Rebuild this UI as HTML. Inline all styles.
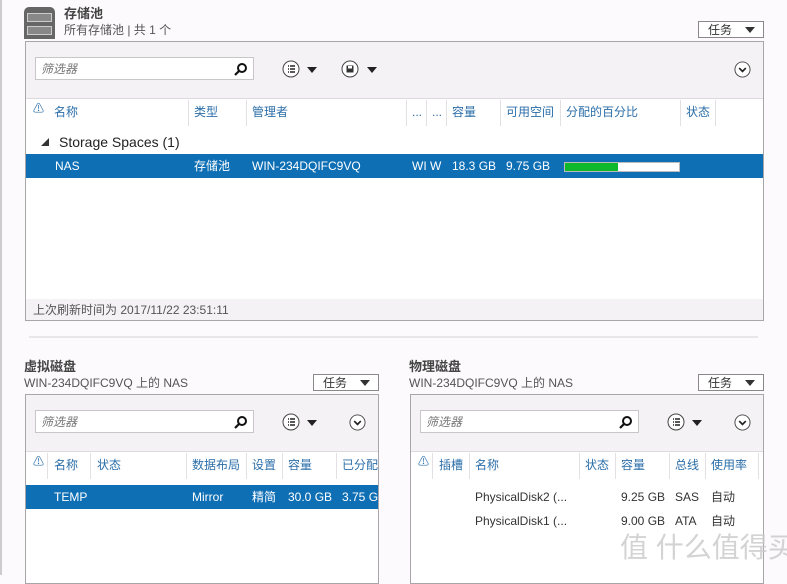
<!DOCTYPE html>
<html><head><meta charset="utf-8"><style>
*{margin:0;padding:0;box-sizing:border-box}
body{width:787px;height:575px;overflow:hidden;background:#fcfafc;font-family:"Liberation Sans","Noto Sans CJK SC",sans-serif;font-size:12px;line-height:15px;color:#333;position:relative}
.a{position:absolute;white-space:nowrap;line-height:15px}
.box{position:absolute;border:1px solid #a9a6a9;background:#fff;overflow:hidden}
.tb{position:absolute;left:0;right:0;top:0;background:#f4f2f4;border-bottom:1px solid #dcdadc}
.filter{position:absolute;background:#fff;border:1px solid #c8c6c8;height:23px;font-style:italic;color:#777;padding:4px 0 0 5px;font-size:12px;line-height:14px}
.filter svg{position:absolute;right:5px;top:4px}
.hdr{color:#2b6ea8}
.sep{position:absolute;width:1px;background:#e2e0e2}
.sel{position:absolute;background:#0f6fb5;color:#fff}
.task{position:absolute;border:1px solid #8a888a;background:#fff;height:17px;font-size:12px;line-height:14px;padding:1px 0 0 9px;color:#333}
.task:after{content:"";position:absolute;right:8px;top:5px;border-left:5px solid transparent;border-right:5px solid transparent;border-top:6px solid #333}
.ic{position:absolute}
.dd{position:absolute;border-left:5px solid transparent;border-right:5px solid transparent;border-top:6px solid #222}
.title{font-weight:bold;font-size:13px;color:#444}
</style></head><body>
<div class="a" style="left:0;top:0;width:2px;height:575px;background:#ccc"></div>

<div class="a" style="left:24px;top:7px;width:31px;height:32px;background:#666;border-radius:5px 5px 0 0"></div>
<div class="a" style="left:27px;top:13px;width:25px;height:9px;background:#888;border:1px solid #ccc"></div>
<div class="a" style="left:27px;top:26px;width:25px;height:9px;background:#888;border:1px solid #ccc"></div>
<div class="a title" style="left:64px;top:6px">存储池</div>
<div class="a" style="left:64px;top:23px;color:#555">所有存储池 | 共 1 个</div>
<div class="task" style="left:698px;top:21px;width:66px">任务</div>

<div class="box" style="left:25px;top:41px;width:739px;height:280px">
 <div class="tb" style="height:57px"></div>
 <div class="filter" style="left:9px;top:15px;width:219px">筛选器<svg width="14" height="14" viewBox="0 0 14 14"><circle cx="8" cy="6" r="4" fill="none" stroke="#111" stroke-width="2"/><path d="M5 9L1 13" stroke="#111" stroke-width="2.2"/></svg></div>
 <svg class="ic" style="left:256px;top:18px" width="18" height="18" viewBox="0 0 18 18"><circle cx="9" cy="9" r="8" fill="#fff" stroke="#444"/><path d="M6 6h1M6 9h1M6 12h1M8 6h5M8 9h5M8 12h5" stroke="#222" stroke-width="1.6"/></svg>
 <div class="dd" style="left:281px;top:25px"></div>
 <svg class="ic" style="left:315px;top:18px" width="18" height="18" viewBox="0 0 18 18"><circle cx="9" cy="9" r="8" fill="#fff" stroke="#444"/><rect x="5.5" y="5.5" width="7" height="7" fill="#333"/><rect x="7" y="6" width="4" height="2.5" fill="#fff"/></svg>
 <div class="dd" style="left:341px;top:25px"></div>
 <svg class="ic" style="left:708px;top:19px" width="17" height="17" viewBox="0 0 18 18"><circle cx="9" cy="9" r="8" fill="#fff" stroke="#444"/><path d="M5.5 7.5L9 11l3.5-3.5" fill="none" stroke="#222" stroke-width="1.8"/></svg>
 <div class="a" style="left:7px;top:60px;color:#2b6ea8;font-size:11px">⚠</div>
 <div class="a hdr" style="left:28px;top:63px">名称</div>
 <div class="sep" style="left:162px;top:58px;height:26px"></div>
 <div class="a hdr" style="left:168px;top:63px">类型</div>
 <div class="sep" style="left:220px;top:58px;height:26px"></div>
 <div class="a hdr" style="left:226px;top:63px">管理者</div>
 <div class="sep" style="left:380px;top:58px;height:26px"></div>
 <div class="a hdr" style="left:386px;top:63px">...</div>
 <div class="sep" style="left:400px;top:58px;height:26px"></div>
 <div class="a hdr" style="left:406px;top:63px">...</div>
 <div class="sep" style="left:420px;top:58px;height:26px"></div>
 <div class="a hdr" style="left:426px;top:63px">容量</div>
 <div class="sep" style="left:474px;top:58px;height:26px"></div>
 <div class="a hdr" style="left:480px;top:63px">可用空间</div>
 <div class="sep" style="left:534px;top:58px;height:26px"></div>
 <div class="a hdr" style="left:540px;top:63px">分配的百分比</div>
 <div class="sep" style="left:654px;top:58px;height:26px"></div>
 <div class="a hdr" style="left:660px;top:63px">状态</div>
 <div class="sep" style="left:689px;top:58px;height:26px"></div>
 <div class="a" style="left:15px;top:93px;font-size:8px;color:#333">◢</div>
 <div class="a" style="left:33px;top:92px;font-size:14px;line-height:17px;color:#222">Storage Spaces (1)</div>
 <div class="sel" style="left:0;top:112px;width:737px;height:24px"></div>
 <div class="a" style="left:29px;top:117px;color:#fff">NAS</div>
 <div class="a" style="left:168px;top:117px;color:#fff">存储池</div>
 <div class="a" style="left:226px;top:117px;color:#fff">WIN-234DQIFC9VQ</div>
 <div class="a" style="left:386px;top:117px;color:#fff">WI W</div>
 <div class="a" style="left:426px;top:117px;color:#fff">18.3 GB</div>
 <div class="a" style="left:480px;top:117px;color:#fff">9.75 GB</div>
 <div class="a" style="left:538px;top:120px;width:116px;height:10px;background:#fff;border:1px solid #bbb"></div>
 <div class="a" style="left:539px;top:121px;width:53px;height:8px;background:#0fb82a"></div>
 <div class="a" style="left:0;top:257px;width:737px;height:22px;background:#f4f2f4"></div>
 <div class="a" style="left:7px;top:261px;color:#555">上次刷新时间为 2017/11/22 23:51:11</div>
</div>
<div class="a" style="left:29px;top:336px;width:729px;height:2px;background:#e8e6e8"></div>

<div class="a title" style="left:24px;top:359px">虚拟磁盘</div>
<div class="a" style="left:24px;top:376px;color:#555">WIN-234DQIFC9VQ 上的 NAS</div>
<div class="task" style="left:313px;top:374px;width:66px">任务</div>
<div class="box" style="left:25px;top:394px;width:354px;height:190px">
 <div class="tb" style="height:57px"></div>
 <div class="filter" style="left:9px;top:15px;width:219px">筛选器<svg width="14" height="14" viewBox="0 0 14 14"><circle cx="8" cy="6" r="4" fill="none" stroke="#111" stroke-width="2"/><path d="M5 9L1 13" stroke="#111" stroke-width="2.2"/></svg></div>
 <svg class="ic" style="left:256px;top:18px" width="18" height="18" viewBox="0 0 18 18"><circle cx="9" cy="9" r="8" fill="#fff" stroke="#444"/><path d="M6 6h1M6 9h1M6 12h1M8 6h5M8 9h5M8 12h5" stroke="#222" stroke-width="1.6"/></svg>
 <div class="dd" style="left:281px;top:25px"></div>
 <svg class="ic" style="left:323px;top:19px" width="17" height="17" viewBox="0 0 18 18"><circle cx="9" cy="9" r="8" fill="#fff" stroke="#444"/><path d="M5.5 7.5L9 11l3.5-3.5" fill="none" stroke="#222" stroke-width="1.8"/></svg>
 <div class="a" style="left:7px;top:60px;color:#2b6ea8;font-size:11px">⚠</div>
 <div class="sep" style="left:21px;top:58px;height:26px"></div>
 <div class="a hdr" style="left:28px;top:63px">名称</div>
 <div class="sep" style="left:64px;top:58px;height:26px"></div>
 <div class="a hdr" style="left:71px;top:63px">状态</div>
 <div class="sep" style="left:160px;top:58px;height:26px"></div>
 <div class="a hdr" style="left:166px;top:63px">数据布局</div>
 <div class="sep" style="left:220px;top:58px;height:26px"></div>
 <div class="a hdr" style="left:226px;top:63px">设置</div>
 <div class="sep" style="left:256px;top:58px;height:26px"></div>
 <div class="a hdr" style="left:262px;top:63px">容量</div>
 <div class="sep" style="left:310px;top:58px;height:26px"></div>
 <div class="a hdr" style="left:316px;top:63px">已分配</div>
 <div class="sel" style="left:0;top:90px;width:354px;height:24px"></div>
 <div class="a" style="left:28px;top:95px;color:#fff">TEMP</div>
 <div class="a" style="left:166px;top:95px;color:#fff">Mirror</div>
 <div class="a" style="left:226px;top:95px;color:#fff">精简</div>
 <div class="a" style="left:262px;top:95px;color:#fff">30.0 GB</div>
 <div class="a" style="left:316px;top:95px;color:#fff">3.75 GB</div>
</div>

<div class="a title" style="left:409px;top:359px">物理磁盘</div>
<div class="a" style="left:409px;top:376px;color:#555">WIN-234DQIFC9VQ 上的 NAS</div>
<div class="task" style="left:698px;top:374px;width:66px">任务</div>
<div class="box" style="left:410px;top:394px;width:354px;height:190px">
 <div class="tb" style="height:57px"></div>
 <div class="filter" style="left:9px;top:15px;width:219px">筛选器<svg width="14" height="14" viewBox="0 0 14 14"><circle cx="8" cy="6" r="4" fill="none" stroke="#111" stroke-width="2"/><path d="M5 9L1 13" stroke="#111" stroke-width="2.2"/></svg></div>
 <svg class="ic" style="left:256px;top:18px" width="18" height="18" viewBox="0 0 18 18"><circle cx="9" cy="9" r="8" fill="#fff" stroke="#444"/><path d="M6 6h1M6 9h1M6 12h1M8 6h5M8 9h5M8 12h5" stroke="#222" stroke-width="1.6"/></svg>
 <div class="dd" style="left:281px;top:25px"></div>
 <svg class="ic" style="left:323px;top:19px" width="17" height="17" viewBox="0 0 18 18"><circle cx="9" cy="9" r="8" fill="#fff" stroke="#444"/><path d="M5.5 7.5L9 11l3.5-3.5" fill="none" stroke="#222" stroke-width="1.8"/></svg>
 <div class="a" style="left:7px;top:60px;color:#2b6ea8;font-size:11px">⚠</div>
 <div class="sep" style="left:21px;top:58px;height:26px"></div>
 <div class="a hdr" style="left:28px;top:63px">插槽</div>
 <div class="sep" style="left:58px;top:58px;height:26px"></div>
 <div class="a hdr" style="left:64px;top:63px">名称</div>
 <div class="sep" style="left:168px;top:58px;height:26px"></div>
 <div class="a hdr" style="left:174px;top:63px">状态</div>
 <div class="sep" style="left:204px;top:58px;height:26px"></div>
 <div class="a hdr" style="left:210px;top:63px">容量</div>
 <div class="sep" style="left:258px;top:58px;height:26px"></div>
 <div class="a hdr" style="left:264px;top:63px">总线</div>
 <div class="sep" style="left:294px;top:58px;height:26px"></div>
 <div class="a hdr" style="left:300px;top:63px">使用率</div>
 <div class="sep" style="left:347px;top:58px;height:26px"></div>
 <div class="a" style="left:64px;top:95px">PhysicalDisk2 (...</div>
 <div class="a" style="left:210px;top:95px">9.25 GB</div>
 <div class="a" style="left:264px;top:95px">SAS</div>
 <div class="a" style="left:300px;top:95px">自动</div>
 <div class="a" style="left:64px;top:119px">PhysicalDisk1 (...</div>
 <div class="a" style="left:210px;top:119px">9.00 GB</div>
 <div class="a" style="left:264px;top:119px">ATA</div>
 <div class="a" style="left:300px;top:119px">自动</div>
</div>
<div class="a" style="left:620px;top:531px;font-size:28px;line-height:34px;color:rgba(200,200,200,0.8)">值 什么值得买</div>
</body></html>
